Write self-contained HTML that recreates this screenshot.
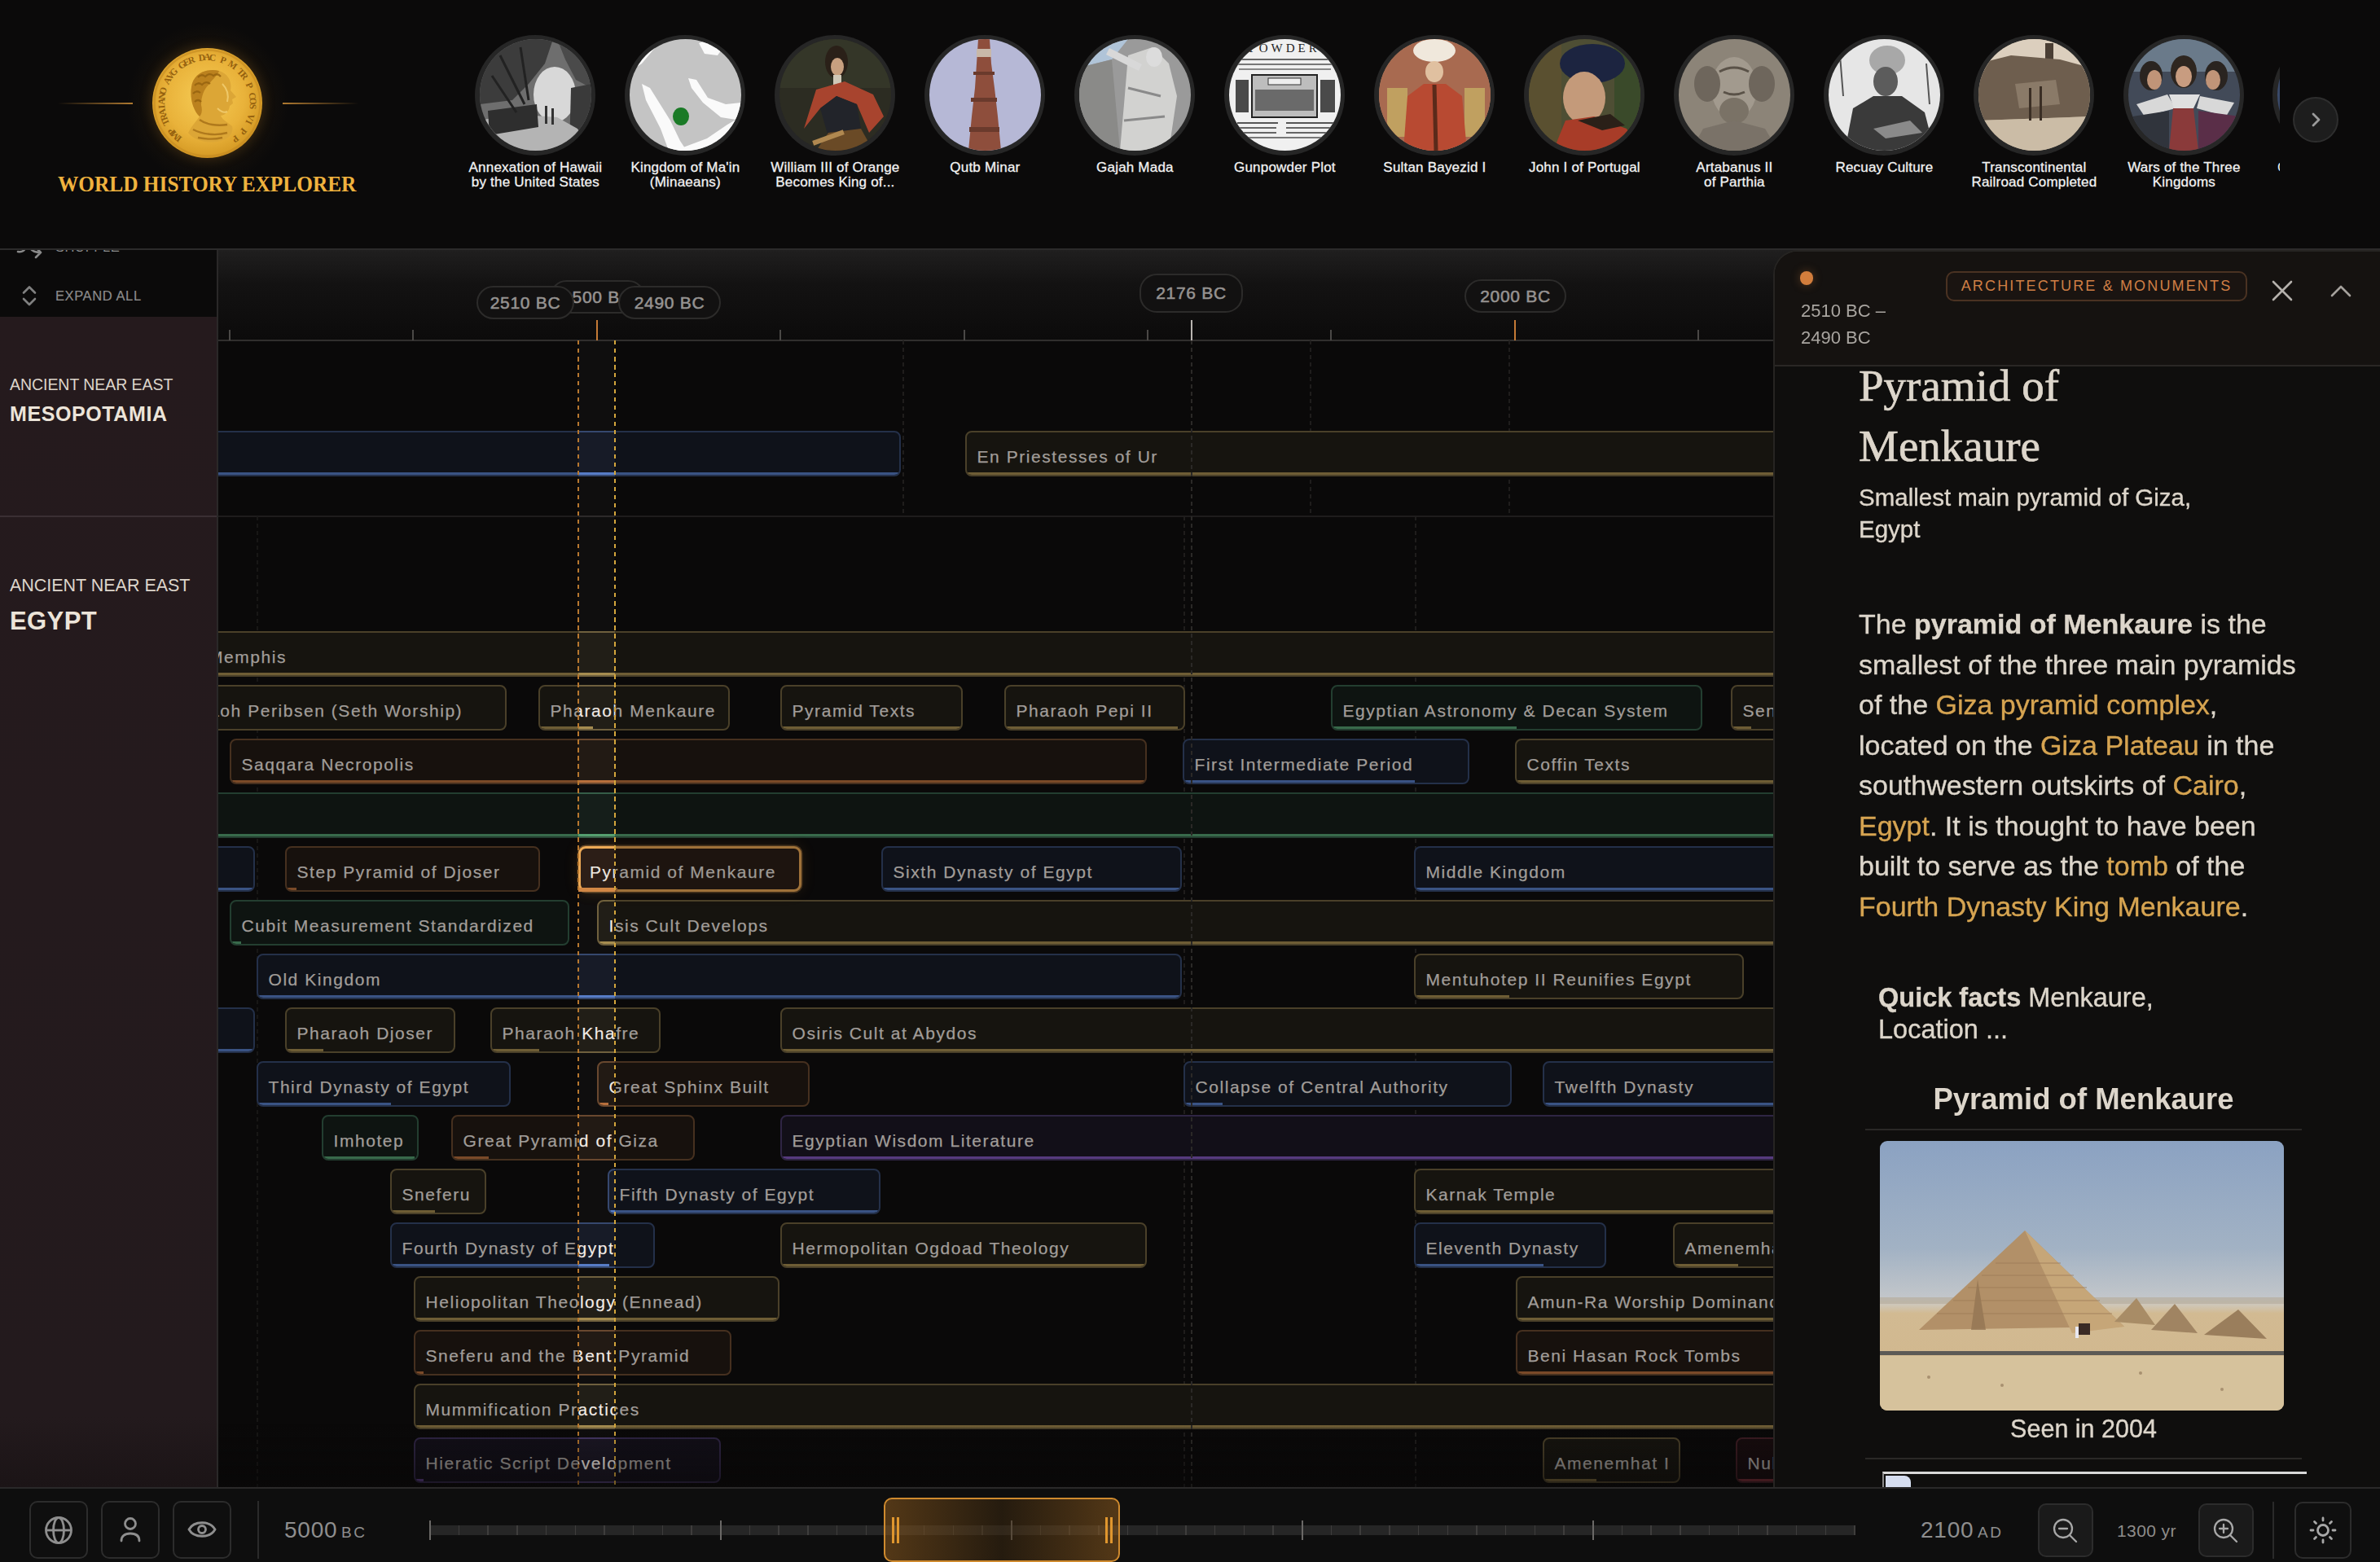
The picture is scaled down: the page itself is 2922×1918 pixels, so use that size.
<!DOCTYPE html><html><head><meta charset="utf-8"><style>
*{box-sizing:border-box;margin:0;padding:0}
html,body{width:2922px;height:1918px;overflow:hidden;background:#0b0a0a;font-family:"Liberation Sans",sans-serif}
.abs{position:absolute}
.bar{position:absolute;height:56px;border:2px solid;border-radius:8px;overflow:hidden;white-space:nowrap}
.bar .t{position:absolute;left:12.5px;top:17px;font-size:21px;letter-spacing:1.55px;color:#a19d99;line-height:26px;-webkit-text-stroke:0.25px #a19d99}
.bar .s{position:absolute;left:-2px;bottom:-2px;height:5px}
.thumb{position:absolute;width:148px;height:148px;border-radius:50%;background:#262626}
.thumb .img{position:absolute;left:5.5px;top:5.5px;width:137px;height:137px;border-radius:50%;overflow:hidden}
.tl{position:absolute;width:184px;text-align:center;color:#f2f2f2;font-size:17px;letter-spacing:0.2px;line-height:17.6px;-webkit-text-stroke:0.3px #f2f2f2}
.pill{position:absolute;height:41px;border:2px solid #2c2b2a;border-radius:21px;background:#121111;color:#969391;font-weight:normal;-webkit-text-stroke:0.55px #969391;font-size:21px;letter-spacing:0.7px;text-align:center;line-height:37px}
.btn{position:absolute;width:72px;height:71px;border:2px solid #2c2c2c;border-radius:10px;background:#0f0f0f}
</style></head><body>
<div class="abs" style="left:0;top:0;width:2922px;height:306px;background:#0b0a0a"></div>
<div class="abs" style="left:155px;top:27px;width:200px;height:200px;border-radius:50%;background:radial-gradient(circle,rgba(160,110,30,0.25) 0%,rgba(120,80,20,0.08) 50%,rgba(0,0,0,0) 70%)"></div>
<div class="abs" style="left:71px;top:126px;width:92px;height:2px;background:linear-gradient(90deg,rgba(176,122,48,0),#b07a30)"></div>
<div class="abs" style="left:347px;top:126px;width:93px;height:2px;background:linear-gradient(90deg,#b07a30,rgba(176,122,48,0))"></div>
<div class="abs" style="left:187px;top:59px;width:135px;height:135px;border-radius:50%;box-shadow:0 0 16px rgba(190,130,40,0.28)">
<svg width="135" height="135" viewBox="0 0 135 135" style="position:absolute;left:0;top:0">
<defs>
<radialGradient id="cg" cx="48%" cy="45%" r="60%"><stop offset="0" stop-color="#f6cc55"/><stop offset="0.6" stop-color="#e9b23a"/><stop offset="0.88" stop-color="#d79c26"/><stop offset="1" stop-color="#a86e16"/></radialGradient>
</defs>
<circle cx="67.5" cy="67.5" r="67.5" fill="url(#cg)"/>
<circle cx="67.5" cy="67.5" r="65" fill="none" stroke="#c48a22" stroke-width="2.5" opacity="0.6"/>
<g font-family="Liberation Serif" font-size="11.5" font-weight="bold" fill="#94600e"><text x="33.6" y="110.8" transform="rotate(-142.0 33.6 110.8)" text-anchor="middle" dominant-baseline="middle">I</text><text x="28.8" y="106.6" transform="rotate(-135.2 28.8 106.6)" text-anchor="middle" dominant-baseline="middle">M</text><text x="24.4" y="101.7" transform="rotate(-128.5 24.4 101.7)" text-anchor="middle" dominant-baseline="middle">P</text><text x="17.6" y="90.7" transform="rotate(-115.0 17.6 90.7)" text-anchor="middle" dominant-baseline="middle">T</text><text x="15.2" y="84.7" transform="rotate(-108.2 15.2 84.7)" text-anchor="middle" dominant-baseline="middle">R</text><text x="13.6" y="78.4" transform="rotate(-101.4 13.6 78.4)" text-anchor="middle" dominant-baseline="middle">A</text><text x="12.7" y="72.0" transform="rotate(-94.7 12.7 72.0)" text-anchor="middle" dominant-baseline="middle">I</text><text x="12.5" y="65.5" transform="rotate(-87.9 12.5 65.5)" text-anchor="middle" dominant-baseline="middle">A</text><text x="13.2" y="59.0" transform="rotate(-81.1 13.2 59.0)" text-anchor="middle" dominant-baseline="middle">N</text><text x="14.5" y="52.7" transform="rotate(-74.4 14.5 52.7)" text-anchor="middle" dominant-baseline="middle">O</text><text x="19.5" y="40.7" transform="rotate(-60.9 19.5 40.7)" text-anchor="middle" dominant-baseline="middle">A</text><text x="23.0" y="35.2" transform="rotate(-54.1 23.0 35.2)" text-anchor="middle" dominant-baseline="middle">V</text><text x="27.1" y="30.2" transform="rotate(-47.3 27.1 30.2)" text-anchor="middle" dominant-baseline="middle">G</text><text x="36.9" y="21.8" transform="rotate(-33.8 36.9 21.8)" text-anchor="middle" dominant-baseline="middle">G</text><text x="42.5" y="18.5" transform="rotate(-27.0 42.5 18.5)" text-anchor="middle" dominant-baseline="middle">E</text><text x="48.4" y="15.9" transform="rotate(-20.3 48.4 15.9)" text-anchor="middle" dominant-baseline="middle">R</text><text x="61.0" y="12.9" transform="rotate(-6.8 61.0 12.9)" text-anchor="middle" dominant-baseline="middle">D</text><text x="67.5" y="12.5" transform="rotate(0.0 67.5 12.5)" text-anchor="middle" dominant-baseline="middle">A</text><text x="74.0" y="12.9" transform="rotate(6.8 74.0 12.9)" text-anchor="middle" dominant-baseline="middle">C</text><text x="86.6" y="15.9" transform="rotate(20.3 86.6 15.9)" text-anchor="middle" dominant-baseline="middle">P</text><text x="98.1" y="21.8" transform="rotate(33.8 98.1 21.8)" text-anchor="middle" dominant-baseline="middle">M</text><text x="107.9" y="30.2" transform="rotate(47.3 107.9 30.2)" text-anchor="middle" dominant-baseline="middle">T</text><text x="112.0" y="35.2" transform="rotate(54.1 112.0 35.2)" text-anchor="middle" dominant-baseline="middle">R</text><text x="118.4" y="46.6" transform="rotate(67.6 118.4 46.6)" text-anchor="middle" dominant-baseline="middle">P</text><text x="121.8" y="59.0" transform="rotate(81.1 121.8 59.0)" text-anchor="middle" dominant-baseline="middle">C</text><text x="122.5" y="65.5" transform="rotate(87.9 122.5 65.5)" text-anchor="middle" dominant-baseline="middle">O</text><text x="122.3" y="72.0" transform="rotate(94.7 122.3 72.0)" text-anchor="middle" dominant-baseline="middle">S</text><text x="119.8" y="84.7" transform="rotate(108.2 119.8 84.7)" text-anchor="middle" dominant-baseline="middle">V</text><text x="117.4" y="90.7" transform="rotate(115.0 117.4 90.7)" text-anchor="middle" dominant-baseline="middle">I</text><text x="110.6" y="101.7" transform="rotate(128.5 110.6 101.7)" text-anchor="middle" dominant-baseline="middle">P</text><text x="101.4" y="110.8" transform="rotate(142.0 101.4 110.8)" text-anchor="middle" dominant-baseline="middle">P</text></g>
<path d="M48 48 C50 32 66 24 82 28 C94 32 98 42 96 52 L103 60 L98 63 L99 68 L95 71 C94 78 90 82 84 83 C86 88 92 91 98 96 C100 104 94 112 84 114 C68 118 52 114 44 104 C48 96 54 90 58 84 C50 76 46 62 48 48 Z" fill="#dca636"/>
<path d="M48 48 C50 32 66 24 82 28 C80 34 74 38 70 44 C64 50 60 58 60 70 C62 78 60 82 58 84 C50 76 46 62 48 48 Z" fill="#b57a1a" opacity="0.85"/>
<path d="M56 36 q4 -5 9 -1 q5 -5 10 -1 q5 -4 9 1 M52 46 q4 -5 9 -1 q5 -5 10 -1 M50 56 q4 -5 9 -1 M52 66 q4 -4 8 0" stroke="#94600e" stroke-width="2.2" fill="none" opacity="0.8"/>
<path d="M58 88 C66 94 80 96 92 94 M50 100 C62 106 78 108 92 104 M56 110 C66 112 78 112 86 110" stroke="#a06a14" stroke-width="2.4" fill="none" opacity="0.75"/>
<path d="M86 44 C92 50 94 58 92 66 M80 74 C84 78 88 80 92 78" stroke="#fbe08a" stroke-width="2" fill="none" opacity="0.6"/>
</svg></div>
<div class="abs" style="left:71px;top:209.5px;font-family:'Liberation Serif',serif;font-weight:bold;font-size:27px;letter-spacing:0px;color:#efb23e;white-space:nowrap;line-height:32px;transform:scaleX(0.938);transform-origin:0 0">WORLD HISTORY EXPLORER</div>
<div class="thumb" style="left:583.4px;top:42.5px"><div class="img"><svg width="137" height="137" viewBox="0 0 137 137"><rect width="137" height="137" fill="#6e6e6e"/>
<ellipse cx="92" cy="68" rx="26" ry="34" fill="#d8d8d8"/>
<polygon points="0,0 90,0 80,30 60,55 40,75 0,80" fill="#3c3c3c"/>
<polygon points="95,0 137,0 137,60 118,50 105,25" fill="#4a4a4a"/>
<polygon points="112,60 137,55 137,137 110,137" fill="#3a3a3a"/>
<polygon points="0,137 0,100 40,92 95,96 120,110 137,137" fill="#b4b4b4"/>
<polygon points="10,88 70,80 72,108 12,118" fill="#2e2e2e"/>
<path d="M25 20 L55 80 M50 10 L60 75 M15 45 L45 90" stroke="#222" stroke-width="3"/>
<rect x="80" y="82" width="3" height="22" fill="#333"/><rect x="88" y="85" width="3" height="20" fill="#333"/></svg></div></div>
<div class="tl" style="left:565.4px;top:197px">Annexation of Hawaii<br>by the United States</div>
<div class="thumb" style="left:767.4px;top:42.5px"><div class="img"><svg width="137" height="137" viewBox="0 0 137 137"><rect width="137" height="137" fill="#c4c4c4"/>
<polygon points="20,0 40,0 30,12 15,30 0,40 0,20" fill="#fafafa"/>
<polygon points="85,5 100,0 115,10 108,20 92,18" fill="#fafafa"/>
<polygon points="15,55 25,60 50,100 62,125 70,137 48,137 38,110 20,75" fill="#fafafa"/>
<polygon points="72,48 82,50 96,72 118,80 137,78 137,100 112,96 90,78 76,60" fill="#fafafa"/>
<polygon points="55,137 95,122 120,105 137,95 137,137" fill="#fafafa"/>
<ellipse cx="63" cy="95" rx="10" ry="11" fill="#1a7a26"/></svg></div></div>
<div class="tl" style="left:749.4px;top:197px">Kingdom of Ma'in<br>(Minaeans)</div>
<div class="thumb" style="left:951.4px;top:42.5px"><div class="img"><svg width="137" height="137" viewBox="0 0 137 137"><rect width="137" height="137" fill="#2c2c22"/>
<rect x="0" y="0" width="137" height="60" fill="#343628"/>
<ellipse cx="70" cy="28" rx="14" ry="20" fill="#2a2018"/>
<ellipse cx="71" cy="34" rx="8" ry="11" fill="#c8a080"/>
<rect x="66" y="44" width="10" height="12" fill="#d0c8b8"/>
<polygon points="30,110 45,62 80,52 115,68 128,95 110,115 95,80 70,70 50,85" fill="#a8442e"/>
<polygon points="50,85 70,70 95,80 100,110 60,120" fill="#22242a"/>
<polygon points="45,137 60,115 100,110 115,137" fill="#6a4a26"/>
<rect x="40" y="118" width="40" height="6" fill="#b08850" transform="rotate(-20 60 121)"/></svg></div></div>
<div class="tl" style="left:933.4px;top:197px">William III of Orange<br>Becomes King of...</div>
<div class="thumb" style="left:1135.4px;top:42.5px"><div class="img"><svg width="137" height="137" viewBox="0 0 137 137"><rect width="137" height="137" fill="#b6b8d6"/>
<polygon points="60,0 74,0 76,30 80,60 84,95 88,137 48,137 52,95 56,60 58,30" fill="#8e4e3c"/>
<rect x="58" y="12" width="18" height="10" fill="#c8b8a8"/>
<rect x="54" y="40" width="26" height="4" fill="#6a3a2c"/><rect x="51" y="72" width="32" height="5" fill="#6a3a2c"/><rect x="49" y="108" width="37" height="6" fill="#6a3a2c"/></svg></div></div>
<div class="tl" style="left:1117.4px;top:197px">Qutb Minar</div>
<div class="thumb" style="left:1319.4px;top:42.5px"><div class="img"><svg width="137" height="137" viewBox="0 0 137 137"><rect width="137" height="137" fill="#9a9a9a"/>
<polygon points="0,0 60,0 40,25 0,35" fill="#b0c4d8"/>
<polygon points="0,35 40,25 50,137 0,137" fill="#8a8a88"/>
<polygon points="60,20 90,10 110,30 120,70 110,137 50,137 55,80" fill="#d2d2d0"/>
<ellipse cx="92" cy="22" rx="10" ry="12" fill="#dcdcdc"/>
<path d="M35 15 L75 35" stroke="#d8d8d8" stroke-width="9"/>
<path d="M60 60 L100 70 M55 100 L105 95" stroke="#8a8a8a" stroke-width="3"/></svg></div></div>
<div class="tl" style="left:1301.4px;top:197px">Gajah Mada</div>
<div class="thumb" style="left:1503.4px;top:42.5px"><div class="img"><svg width="137" height="137" viewBox="0 0 137 137"><rect width="137" height="137" fill="#f0f0f0"/>
<text x="68" y="16" font-family="Liberation Serif" font-size="15" text-anchor="middle" fill="#222" letter-spacing="4">POWDER</text>
<rect x="10" y="24" width="117" height="2" fill="#666"/><rect x="8" y="30" width="121" height="2" fill="#777"/><rect x="12" y="36" width="113" height="2" fill="#888"/>
<rect x="28" y="44" width="80" height="52" fill="#bdbdbd" stroke="#222" stroke-width="2"/>
<rect x="32" y="62" width="72" height="26" fill="#6a6a6a"/>
<rect x="48" y="48" width="40" height="8" fill="#eee" stroke="#333"/>
<rect x="8" y="50" width="16" height="40" fill="#4a4a4a"/><rect x="112" y="50" width="18" height="40" fill="#4a4a4a"/>
<rect x="10" y="102" width="50" height="2" fill="#555"/><rect x="70" y="102" width="58" height="2" fill="#555"/><rect x="12" y="108" width="46" height="2" fill="#666"/><rect x="70" y="108" width="56" height="2" fill="#666"/><rect x="14" y="114" width="44" height="2" fill="#666"/><rect x="70" y="114" width="54" height="2" fill="#666"/><rect x="24" y="120" width="90" height="2" fill="#777"/></svg></div></div>
<div class="tl" style="left:1485.4px;top:197px">Gunpowder Plot</div>
<div class="thumb" style="left:1687.4px;top:42.5px"><div class="img"><svg width="137" height="137" viewBox="0 0 137 137"><rect width="137" height="137" fill="#b88a6a"/>
<polygon points="0,40 40,0 100,0 137,40 137,137 0,137" fill="#a86a50"/>
<rect x="10" y="60" width="25" height="60" fill="#c0a060"/><rect x="105" y="60" width="25" height="60" fill="#c0a060"/>
<ellipse cx="68" cy="14" rx="26" ry="14" fill="#f0e8dc"/>
<ellipse cx="68" cy="40" rx="11" ry="13" fill="#e0c0a0"/>
<polygon points="30,137 35,70 55,55 82,55 102,70 108,137" fill="#b84a32"/>
<path d="M68 56 L70 137" stroke="#5a2a1a" stroke-width="5"/></svg></div></div>
<div class="tl" style="left:1669.4px;top:197px">Sultan Bayezid I</div>
<div class="thumb" style="left:1871.4px;top:42.5px"><div class="img"><svg width="137" height="137" viewBox="0 0 137 137"><rect width="137" height="137" fill="#4e4e34"/>
<rect x="0" y="0" width="40" height="137" fill="#5a5030"/>
<rect x="105" y="0" width="32" height="137" fill="#3a4a2a"/>
<ellipse cx="78" cy="30" rx="40" ry="24" fill="#1c2440"/>
<ellipse cx="68" cy="72" rx="26" ry="32" fill="#c49a7a"/>
<polygon points="30,137 45,100 80,95 120,110 137,137" fill="#a83c28"/>
<polygon points="60,100 100,92 118,106 90,112" fill="#2a2018"/></svg></div></div>
<div class="tl" style="left:1853.4px;top:197px">John I of Portugal</div>
<div class="thumb" style="left:2055.4px;top:42.5px"><div class="img"><svg width="137" height="137" viewBox="0 0 137 137"><rect width="137" height="137" fill="#8c8478"/>
<ellipse cx="68" cy="60" rx="28" ry="38" fill="#a29a8e"/>
<ellipse cx="35" cy="55" rx="16" ry="22" fill="#6e665c"/><ellipse cx="102" cy="55" rx="16" ry="22" fill="#6e665c"/>
<ellipse cx="68" cy="88" rx="18" ry="16" fill="#7a7266"/>
<polygon points="15,137 30,110 68,100 106,110 122,137" fill="#7a7268"/>
<path d="M50 40 q18 -10 36 0 M55 65 q13 6 26 0" stroke="#5a5248" stroke-width="3" fill="none"/></svg></div></div>
<div class="tl" style="left:2037.4px;top:197px">Artabanus II<br>of Parthia</div>
<div class="thumb" style="left:2239.4px;top:42.5px"><div class="img"><svg width="137" height="137" viewBox="0 0 137 137"><rect width="137" height="137" fill="#e6e6e6"/>
<ellipse cx="72" cy="26" rx="22" ry="18" fill="#a8a8a8"/>
<ellipse cx="70" cy="52" rx="15" ry="18" fill="#5c5c5c"/>
<polygon points="20,137 30,85 55,70 90,70 118,90 130,137" fill="#3a3a3a"/>
<polygon points="55,110 100,100 115,115 70,122" fill="#8a8a8a"/>
<path d="M14 20 L18 70 M120 30 L124 80" stroke="#555" stroke-width="2"/></svg></div></div>
<div class="tl" style="left:2221.4px;top:197px">Recuay Culture</div>
<div class="thumb" style="left:2423.4px;top:42.5px"><div class="img"><svg width="137" height="137" viewBox="0 0 137 137"><rect width="137" height="137" fill="#bcae98"/>
<rect x="0" y="0" width="137" height="40" fill="#dccfbe"/>
<rect x="82" y="5" width="10" height="28" fill="#4a3e34"/>
<polygon points="0,30 40,20 100,25 137,35 137,95 0,100" fill="#6e5e4e"/>
<polygon points="45,55 95,50 100,80 50,85" fill="#8a7a68"/>
<polygon points="0,100 137,95 137,137 0,137" fill="#cbbca6"/>
<rect x="62" y="60" width="3" height="40" fill="#3a2e24"/><rect x="75" y="58" width="3" height="42" fill="#3a2e24"/></svg></div></div>
<div class="tl" style="left:2405.4px;top:197px">Transcontinental<br>Railroad Completed</div>
<div class="thumb" style="left:2607.4px;top:42.5px"><div class="img"><svg width="137" height="137" viewBox="0 0 137 137"><rect width="137" height="137" fill="#424a58"/>
<rect x="0" y="0" width="137" height="40" fill="#6a7a8a"/>
<ellipse cx="28" cy="45" rx="14" ry="18" fill="#2a2420"/><ellipse cx="68" cy="40" rx="16" ry="20" fill="#2e2620"/><ellipse cx="108" cy="45" rx="14" ry="18" fill="#2a2420"/>
<ellipse cx="32" cy="50" rx="9" ry="12" fill="#c09478"/><ellipse cx="68" cy="46" rx="10" ry="13" fill="#c89c80"/><ellipse cx="104" cy="50" rx="9" ry="12" fill="#c09478"/>
<polygon points="10,80 48,68 58,85 20,95" fill="#d8d8d8"/><polygon points="50,68 88,68 80,85 56,85" fill="#e0e0e0"/><polygon points="88,70 130,78 120,95 84,85" fill="#d8d8d8"/>
<polygon points="55,85 80,85 86,137 50,137" fill="#8a3a3a"/>
<polygon points="5,95 50,88 50,137 0,137" fill="#30343c"/><polygon points="86,88 137,95 137,137 86,137" fill="#5a2e48"/></svg></div></div>
<div class="tl" style="left:2589.4px;top:197px">Wars of the Three<br>Kingdoms</div>
<div class="abs" style="left:2780px;top:0;width:19px;height:306px;overflow:hidden"><div class="thumb" style="left:10px;top:42.5px"><div class="img" style="background:#3a4a6a"></div></div><div class="abs" style="left:16px;top:197px;color:#f2f2f2;font-size:17px;line-height:17.6px;white-space:nowrap">Construction of</div></div>
<div class="abs" style="left:2815px;top:119px;width:56px;height:56px;border-radius:50%;background:#1d1d1d;border:2px solid #2e2e2e"></div>
<svg class="abs" style="left:2833px;top:137px" width="20" height="20" viewBox="0 0 20 20"><path d="M7 3 L14 10 L7 17" stroke="#9a9a9a" stroke-width="2.8" fill="none" stroke-linecap="round" stroke-linejoin="round"/></svg>
<div class="abs" style="left:0;top:306px;width:266px;height:83px;background:#0b0a0a;overflow:hidden"><svg class="abs" style="left:18px;top:-15px" width="36" height="32" viewBox="0 0 36 32"><path d="M4 18 C9 19 13 17 14 10 M18 10 C19 17 24 19 32 19 M26 13 L32 19 L26 25" stroke="#8a8a8a" stroke-width="2.6" fill="none" stroke-linecap="round" stroke-linejoin="round"/></svg><div class="abs" style="left:68px;top:-13px;font-size:16.5px;letter-spacing:0.6px;color:#8a8a8a;line-height:20px">SHUFFLE</div><svg class="abs" style="left:27px;top:44px" width="18" height="26" viewBox="0 0 18 26"><path d="M2 9.5 L9 2.5 L16 9.5 M2 17 L9 24 L16 17" stroke="#808080" stroke-width="2.6" fill="none" stroke-linecap="round" stroke-linejoin="round"/></svg><div class="abs" style="left:68px;top:47px;font-size:16.5px;letter-spacing:0.6px;color:#8c8c8c;line-height:20px;-webkit-text-stroke:0.2px #8c8c8c">EXPAND ALL</div></div>
<div class="abs" style="left:0;top:389px;width:266px;height:1437px;background:linear-gradient(#251a1d 0%,#231a1d 94%,#1b1416 100%)"></div>
<div class="abs" style="left:0;top:633px;width:266px;height:2px;background:#3a2f33"></div>
<div class="abs" style="left:12px;top:461px;font-size:19.5px;letter-spacing:-0.05px;color:#ddd5cb;line-height:22px;white-space:nowrap">ANCIENT NEAR EAST</div>
<div class="abs" style="left:12px;top:494px;font-size:25px;font-weight:bold;letter-spacing:0.6px;color:#ece4d9;line-height:28px;white-space:nowrap">MESOPOTAMIA</div>
<div class="abs" style="left:12px;top:707px;font-size:21.5px;letter-spacing:-0.02px;color:#ddd5cb;line-height:24px;white-space:nowrap">ANCIENT NEAR EAST</div>
<div class="abs" style="left:12px;top:746px;font-size:31px;font-weight:bold;letter-spacing:0.4px;color:#ece4d9;line-height:34px;white-space:nowrap">EGYPT</div>
<div class="abs" style="left:266px;top:306px;width:2px;height:1520px;background:#2a2828"></div>
<div class="abs" style="left:268px;top:306px;width:1962px;height:1520px;overflow:hidden;background:#0a0909">
<div class="abs" style="left:0;top:0;width:100%;height:112px;background:linear-gradient(#201f1f 0%,#131212 38%,#0c0b0b 100%)"></div>
<div class="abs" style="left:0;top:111px;width:100%;height:2px;background:#302e2d"></div>
<div class="abs" style="left:13px;top:99px;width:2px;height:13px;background:#4a4846"></div>
<div class="abs" style="left:238px;top:99px;width:2px;height:13px;background:#4a4846"></div>
<div class="abs" style="left:689px;top:99px;width:2px;height:13px;background:#4a4846"></div>
<div class="abs" style="left:915px;top:99px;width:2px;height:13px;background:#4a4846"></div>
<div class="abs" style="left:1140px;top:99px;width:2px;height:13px;background:#4a4846"></div>
<div class="abs" style="left:1365px;top:99px;width:2px;height:13px;background:#4a4846"></div>
<div class="abs" style="left:1816px;top:99px;width:2px;height:13px;background:#4a4846"></div>
<div class="abs" style="left:464px;top:87px;width:2px;height:25px;background:#c47a36"></div>
<div class="abs" style="left:1194px;top:87px;width:2px;height:25px;background:#b8b4b0"></div>
<div class="abs" style="left:1591px;top:87px;width:2px;height:25px;background:#c47a36"></div>
<div class="pill" style="left:407px;top:38px;width:117px;height:41px;line-height:37px">2500 BC</div>
<div class="pill" style="left:317px;top:45px;width:120px;height:41px;line-height:37px">2510 BC</div>
<div class="pill" style="left:491px;top:45px;width:126px;height:41px;line-height:37px">2490 BC</div>
<div class="pill" style="left:1131px;top:30px;width:127px;height:48px;line-height:44px">2176 BC</div>
<div class="pill" style="left:1530px;top:37px;width:125px;height:41px;line-height:37px">2000 BC</div>
<div class="abs" style="left:0;top:327px;width:100%;height:1.5px;background:#1e1c1c"></div>
<div class="abs" style="left:840px;top:112px;width:1.5px;height:215px;background:repeating-linear-gradient(#1f1d1c 0 5px,transparent 5px 9px)"></div>
<div class="abs" style="left:1340px;top:112px;width:1.5px;height:215px;background:repeating-linear-gradient(#1f1d1c 0 5px,transparent 5px 9px)"></div>
<div class="abs" style="left:1584px;top:112px;width:1.5px;height:215px;background:repeating-linear-gradient(#1f1d1c 0 5px,transparent 5px 9px)"></div>
<div class="abs" style="left:47px;top:328px;width:1.5px;height:1192px;background:repeating-linear-gradient(#181716 0 5px,transparent 5px 9px)"></div>
<div class="abs" style="left:1185px;top:328px;width:1.5px;height:1192px;background:repeating-linear-gradient(#1f1d1c 0 5px,transparent 5px 9px)"></div>
<div class="abs" style="left:1469px;top:328px;width:1.5px;height:1192px;background:repeating-linear-gradient(#1f1d1c 0 5px,transparent 5px 9px)"></div>
<div class="bar" style="left:-68px;top:223px;width:906px;background:#0f121a;border-color:#243049"><div class="s" style="width:908px;background:#3a5384"></div><div class="t"></div></div>
<div class="bar" style="left:917px;top:223px;width:1115px;background:#16140f;border-color:#4a4029"><div class="s" style="width:1117px;background:#6e5d35"></div><div class="t">En Priestesses of Ur</div></div>
<div class="bar" style="left:-118px;top:469px;width:2150px;background:#16140f;border-color:#4a4029"><div class="s" style="width:2152px;background:#6e5d35"></div><div class="t" style="left:104px">Memphis</div></div>
<div class="bar" style="left:-76px;top:535px;width:430px;background:#16140f;border-color:#4a4029"><div class="s" style="width:2px;background:#6e5d35"></div><div class="t">Pharaoh Peribsen (Seth Worship)</div></div>
<div class="bar" style="left:393px;top:535px;width:235px;background:#16140f;border-color:#4a4029"><div class="s" style="width:67px;background:#6e5d35"></div><div class="t">Pharaoh Menkaure</div></div>
<div class="bar" style="left:690px;top:535px;width:224px;background:#16140f;border-color:#4a4029"><div class="s" style="width:226px;background:#6e5d35"></div><div class="t">Pyramid Texts</div></div>
<div class="bar" style="left:965px;top:535px;width:222px;background:#16140f;border-color:#4a4029"><div class="s" style="width:213px;background:#6e5d35"></div><div class="t">Pharaoh Pepi II</div></div>
<div class="bar" style="left:1366px;top:535px;width:456px;background:#0e1411;border-color:#233e30"><div class="s" style="width:228px;background:#386a4b"></div><div class="t">Egyptian Astronomy &amp; Decan System</div></div>
<div class="bar" style="left:1857px;top:535px;width:175px;background:#16140f;border-color:#4a4029"><div class="s" style="width:25px;background:#6e5d35"></div><div class="t">Senusret</div></div>
<div class="bar" style="left:14px;top:601px;width:1126px;background:#17110d;border-color:#46301f"><div class="s" style="width:1128px;background:#7a4a28"></div><div class="t">Saqqara Necropolis</div></div>
<div class="bar" style="left:1184px;top:601px;width:352px;background:#0f121a;border-color:#243049"><div class="s" style="width:285px;background:#3a5384"></div><div class="t">First Intermediate Period</div></div>
<div class="bar" style="left:1592px;top:601px;width:440px;background:#16140f;border-color:#4a4029"><div class="s" style="width:442px;background:#6e5d35"></div><div class="t">Coffin Texts</div></div>
<div class="bar" style="left:-118px;top:667px;width:2150px;background:#0e1411;border-color:#233e30"><div class="s" style="width:2152px;background:#386a4b"></div><div class="t"></div></div>
<div class="bar" style="left:-118px;top:733px;width:163px;background:#0f121a;border-color:#243049"><div class="s" style="width:165px;background:#3a5384"></div><div class="t"></div></div>
<div class="bar" style="left:82px;top:733px;width:313px;background:#17110d;border-color:#46301f"><div class="s" style="width:14px;background:#7a4a28"></div><div class="t">Step Pyramid of Djoser</div></div>
<div class="bar" style="left:814px;top:733px;width:369px;background:#0f121a;border-color:#243049"><div class="s" style="width:371px;background:#3a5384"></div><div class="t">Sixth Dynasty of Egypt</div></div>
<div class="bar" style="left:1468px;top:733px;width:564px;background:#0f121a;border-color:#243049"><div class="s" style="width:566px;background:#3a5384"></div><div class="t">Middle Kingdom</div></div>
<div class="bar" style="left:14px;top:799px;width:417px;background:#0e1411;border-color:#233e30"><div class="s" style="width:14px;background:#386a4b"></div><div class="t">Cubit Measurement Standardized</div></div>
<div class="bar" style="left:465px;top:799px;width:1567px;background:#16140f;border-color:#4a4029"><div class="s" style="width:1569px;background:#6e5d35"></div><div class="t">Isis Cult Develops</div></div>
<div class="bar" style="left:47px;top:865px;width:1136px;background:#0f121a;border-color:#243049"><div class="s" style="width:1138px;background:#3a5384"></div><div class="t">Old Kingdom</div></div>
<div class="bar" style="left:1468px;top:865px;width:405px;background:#16140f;border-color:#4a4029"><div class="s" style="width:117px;background:#6e5d35"></div><div class="t">Mentuhotep II Reunifies Egypt</div></div>
<div class="bar" style="left:-118px;top:931px;width:163px;background:#0f121a;border-color:#243049"><div class="s" style="width:165px;background:#3a5384"></div><div class="t"></div></div>
<div class="bar" style="left:82px;top:931px;width:209px;background:#16140f;border-color:#4a4029"><div class="s" style="width:47px;background:#6e5d35"></div><div class="t">Pharaoh Djoser</div></div>
<div class="bar" style="left:334px;top:931px;width:209px;background:#16140f;border-color:#4a4029"><div class="s" style="width:60px;background:#6e5d35"></div><div class="t">Pharaoh Khafre</div></div>
<div class="bar" style="left:690px;top:931px;width:1342px;background:#16140f;border-color:#4a4029"><div class="s" style="width:1344px;background:#6e5d35"></div><div class="t">Osiris Cult at Abydos</div></div>
<div class="bar" style="left:47px;top:997px;width:312px;background:#0f121a;border-color:#243049"><div class="s" style="width:165px;background:#3a5384"></div><div class="t">Third Dynasty of Egypt</div></div>
<div class="bar" style="left:465px;top:997px;width:261px;background:#17110d;border-color:#46301f"><div class="s" style="width:14px;background:#7a4a28"></div><div class="t">Great Sphinx Built</div></div>
<div class="bar" style="left:1185px;top:997px;width:403px;background:#0f121a;border-color:#243049"><div class="s" style="width:48px;background:#3a5384"></div><div class="t">Collapse of Central Authority</div></div>
<div class="bar" style="left:1626px;top:997px;width:406px;background:#0f121a;border-color:#243049"><div class="s" style="width:408px;background:#3a5384"></div><div class="t">Twelfth Dynasty</div></div>
<div class="bar" style="left:127px;top:1063px;width:119px;background:#0e1411;border-color:#233e30"><div class="s" style="width:114px;background:#386a4b"></div><div class="t">Imhotep</div></div>
<div class="bar" style="left:286px;top:1063px;width:299px;background:#17110d;border-color:#46301f"><div class="s" style="width:46px;background:#7a4a28"></div><div class="t">Great Pyramid of Giza</div></div>
<div class="bar" style="left:690px;top:1063px;width:1342px;background:#120f18;border-color:#2f2544"><div class="s" style="width:1344px;background:#563a7e"></div><div class="t">Egyptian Wisdom Literature</div></div>
<div class="bar" style="left:211px;top:1129px;width:118px;background:#16140f;border-color:#4a4029"><div class="s" style="width:55px;background:#6e5d35"></div><div class="t">Sneferu</div></div>
<div class="bar" style="left:478px;top:1129px;width:335px;background:#0f121a;border-color:#243049"><div class="s" style="width:337px;background:#3a5384"></div><div class="t">Fifth Dynasty of Egypt</div></div>
<div class="bar" style="left:1468px;top:1129px;width:564px;background:#16140f;border-color:#4a4029"><div class="s" style="width:566px;background:#6e5d35"></div><div class="t">Karnak Temple</div></div>
<div class="bar" style="left:211px;top:1195px;width:325px;background:#0f121a;border-color:#243049"><div class="s" style="width:269px;background:#3a5384"></div><div class="t">Fourth Dynasty of Egypt</div></div>
<div class="bar" style="left:690px;top:1195px;width:450px;background:#16140f;border-color:#4a4029"><div class="s" style="width:452px;background:#6e5d35"></div><div class="t">Hermopolitan Ogdoad Theology</div></div>
<div class="bar" style="left:1468px;top:1195px;width:236px;background:#0f121a;border-color:#243049"><div class="s" style="width:159px;background:#3a5384"></div><div class="t">Eleventh Dynasty</div></div>
<div class="bar" style="left:1786px;top:1195px;width:246px;background:#16140f;border-color:#4a4029"><div class="s" style="width:80px;background:#6e5d35"></div><div class="t">Amenemhat II</div></div>
<div class="bar" style="left:240px;top:1261px;width:449px;background:#16140f;border-color:#4a4029"><div class="s" style="width:451px;background:#6e5d35"></div><div class="t">Heliopolitan Theology (Ennead)</div></div>
<div class="bar" style="left:1593px;top:1261px;width:439px;background:#16140f;border-color:#4a4029"><div class="s" style="width:441px;background:#6e5d35"></div><div class="t">Amun-Ra Worship Dominance</div></div>
<div class="bar" style="left:240px;top:1327px;width:390px;background:#17110d;border-color:#46301f"><div class="s" style="width:12px;background:#7a4a28"></div><div class="t">Sneferu and the Bent Pyramid</div></div>
<div class="bar" style="left:1593px;top:1327px;width:439px;background:#17110d;border-color:#46301f"><div class="s" style="width:441px;background:#7a4a28"></div><div class="t">Beni Hasan Rock Tombs</div></div>
<div class="bar" style="left:240px;top:1393px;width:1792px;background:#16140f;border-color:#4a4029"><div class="s" style="width:1794px;background:#6e5d35"></div><div class="t">Mummification Practices</div></div>
<div class="bar" style="left:240px;top:1459px;width:377px;background:#120f18;border-color:#2f2544"><div class="s" style="width:12px;background:#563a7e"></div><div class="t">Hieratic Script Development</div></div>
<div class="bar" style="left:1626px;top:1459px;width:169px;background:#16140f;border-color:#4a4029"><div class="s" style="width:66px;background:#6e5d35"></div><div class="t">Amenemhat I</div></div>
<div class="bar" style="left:1863px;top:1459px;width:169px;background:#170c0e;border-color:#3c1c22"><div class="s" style="width:171px;background:#6e2a32"></div><div class="t">Nubian Campaigns</div></div>
<div class="abs" style="left:1194px;top:112px;width:1.5px;height:1408px;background:repeating-linear-gradient(#2b2927 0 5px,transparent 5px 9px)"></div>
<div class="abs" style="left:442px;top:733px;width:274px;height:56px;border:3px solid #9e7139;border-radius:9px;background:#1d140f;box-shadow:0 0 0 1.5px rgba(160,115,60,0.35),0 0 18px rgba(200,130,50,0.16)"><div class="abs" style="left:-3px;bottom:-3px;width:48px;height:5px;background:#8c5a2e"></div><div class="abs" style="left:11px;top:16px;font-size:21px;letter-spacing:1.55px;color:#9e9a95;-webkit-text-stroke:0.25px #9e9a95;line-height:26px;white-space:nowrap">Pyramid of Menkaure</div></div>
<div class="abs" style="left:442px;top:113px;width:45px;height:1407px;backdrop-filter:brightness(1.5)"></div>
<div class="abs" style="left:441px;top:112px;width:2px;height:1408px;background:repeating-linear-gradient(#b8782f 0 5.5px,transparent 5.5px 10px)"></div>
<div class="abs" style="left:486px;top:112px;width:2px;height:1408px;background:repeating-linear-gradient(#d4a63c 0 5.5px,transparent 5.5px 10px)"></div>
<div class="abs" style="left:0;top:1442px;width:100%;height:78px;background:linear-gradient(rgba(8,7,7,0),rgba(8,7,7,0.5))"></div>
</div>
<div class="abs" style="left:2177px;top:307px;width:760px;height:1519px;background:#0f0e0d;border-top-left-radius:30px;border-left:2px solid #262422;border-top:2px solid #262422;overflow:hidden">
<div class="abs" style="left:0;top:0;width:760px;height:141px;background:#151210;border-bottom:2px solid #2a2725"></div>
<div class="abs" style="left:30.5px;top:24px;width:16.5px;height:16.5px;border-radius:50%;background:#d27d3c;box-shadow:0 0 12px rgba(210,125,60,0.35)"></div>
<div class="abs" style="left:32px;top:55.5px;font-size:22px;color:#a9a5a0;line-height:33px;white-space:nowrap">2510 BC –<br>2490 BC</div>
<div class="abs" style="left:210px;top:24px;width:370px;height:37px;border:2px solid #4a3222;border-radius:10px;background:#1a1411;color:#cf7f45;font-size:18px;letter-spacing:2.15px;line-height:33px;text-align:center;white-space:nowrap">ARCHITECTURE &amp; MONUMENTS</div>
<svg class="abs" style="left:609px;top:33.5px" width="28" height="28" viewBox="0 0 28 28"><path d="M3 3 L25 25 M25 3 L3 25" stroke="#b5b1ac" stroke-width="2.6" stroke-linecap="round"/></svg>
<svg class="abs" style="left:682px;top:38.5px" width="26" height="18" viewBox="0 0 26 18"><path d="M2 15 L13 4 L24 15" stroke="#a5a19c" stroke-width="2.6" fill="none" stroke-linecap="round" stroke-linejoin="round"/></svg>
<div class="abs" style="left:103px;top:128px;font-family:'Liberation Serif',serif;font-size:55px;color:#ddd6cb;-webkit-text-stroke:0.7px #ddd6cb;line-height:74px;white-space:nowrap">Pyramid of<br>Menkaure</div>
<div class="abs" style="left:103px;top:282px;font-size:29.5px;color:#ddd6cb;-webkit-text-stroke:0.35px #ddd6cb;line-height:39px;white-space:nowrap">Smallest main pyramid of Giza,<br>Egypt</div>
<div class="abs" style="left:103px;top:433px;font-size:34px;color:#ddd6cb;-webkit-text-stroke:0.35px #ddd6cb;line-height:49.5px;white-space:nowrap">The <b>pyramid of Menkaure</b> is the<br>smallest of the three main pyramids<br>of the <span style="color:#d6a451;-webkit-text-stroke-color:#d6a451">Giza pyramid complex</span>,<br>located on the <span style="color:#d6a451;-webkit-text-stroke-color:#d6a451">Giza Plateau</span> in the<br>southwestern outskirts of <span style="color:#d6a451;-webkit-text-stroke-color:#d6a451">Cairo</span>,<br><span style="color:#d6a451;-webkit-text-stroke-color:#d6a451">Egypt</span>. It is thought to have been<br>built to serve as the <span style="color:#d6a451;-webkit-text-stroke-color:#d6a451">tomb</span> of the<br><span style="color:#d6a451;-webkit-text-stroke-color:#d6a451">Fourth Dynasty King Menkaure</span>.</div>
<div class="abs" style="left:127px;top:897px;font-size:32.5px;color:#ddd6cb;-webkit-text-stroke:0.35px #ddd6cb;line-height:39px;white-space:nowrap"><b>Quick facts</b> Menkaure,<br>Location ...</div>
<div class="abs" style="left:111px;top:1019px;width:536px;text-align:center;font-size:36.5px;font-weight:bold;color:#ddd6cb;line-height:44px;white-space:nowrap">Pyramid of Menkaure</div>
<div class="abs" style="left:111px;top:1077px;width:536px;height:2px;background:#2a2826"></div>
<div class="abs" style="left:129px;top:1092px;width:496px;height:331px;border-radius:9px;overflow:hidden;background:linear-gradient(#8ba2c2 0%,#a2b2c4 40%,#c2c6ca 58%,#cfc6b6 61%,#d2ba92 64%,#d0b68c 100%)">
<svg width="496" height="331" viewBox="0 0 496 331" style="position:absolute;left:0;top:0">
<rect x="0" y="192" width="496" height="8" fill="#b4aa98" opacity="0.6"/>
<polygon points="48,232 178,110 300,228" fill="#b29068"/>
<polygon points="178,110 300,228 236,236" fill="#c6a678"/>
<polygon points="120,170 112,232 130,232" fill="#8e7050" opacity="0.7"/>
<path d="M70 212 L285 212 M90 196 L270 196 M108 180 L254 180 M125 165 L238 165 M142 150 L222 150" stroke="#9a7a56" stroke-width="1.5" opacity="0.5"/>
<polygon points="288,222 315,193 338,226" fill="#a88c66"/>
<polygon points="333,232 362,200 390,236" fill="#a08462"/>
<polygon points="398,238 440,207 475,243" fill="#9a7e5c"/>
<rect x="0" y="258" width="496" height="5" fill="#5c5a56"/>
<rect x="0" y="264" width="496" height="67" fill="#d6c29c"/>
<rect x="244" y="224" width="14" height="14" fill="#3a2a24"/><rect x="240" y="228" width="4" height="14" fill="#e8e8f0"/>
<circle cx="60" cy="290" r="2" fill="#a89070"/><circle cx="150" cy="300" r="2" fill="#a89070"/><circle cx="320" cy="285" r="2" fill="#a89070"/><circle cx="420" cy="305" r="2" fill="#a89070"/>
</svg></div>
<div class="abs" style="left:111px;top:1427px;width:536px;text-align:center;font-size:30.5px;color:#ddd6cb;-webkit-text-stroke:0.35px #ddd6cb;line-height:36px;white-space:nowrap">Seen in 2004</div>
<div class="abs" style="left:111px;top:1480.5px;width:536px;height:2px;background:#2a2826"></div>
<div class="abs" style="left:132px;top:1498px;width:521px;height:30px;border-top:3px solid #d8d8d8;border-left:2px solid #888"></div>
<div class="abs" style="left:136px;top:1503px;width:31px;height:18px;background:#d6def0;border-top-right-radius:8px"></div>
</div>
<div class="abs" style="left:0;top:1826px;width:2922px;height:92px;background:#0e0e0e;border-top:2px solid #2a2929"></div>
<div class="btn" style="left:36px;top:1843px"></div>
<div class="btn" style="left:124px;top:1843px"></div>
<div class="btn" style="left:212px;top:1843px"></div>
<svg class="abs" style="left:53px;top:1862px" width="38" height="38" viewBox="0 0 38 38"><g stroke="#8e8e8e" stroke-width="2.8" fill="none"><circle cx="19" cy="17" r="15.5"/><ellipse cx="19" cy="17" rx="6.5" ry="15.5"/><path d="M3.5 17 H34.5"/></g></svg>
<svg class="abs" style="left:143px;top:1862px" width="34" height="36" viewBox="0 0 34 36"><g stroke="#8e8e8e" stroke-width="2.8" fill="none" stroke-linecap="round"><circle cx="17" cy="9" r="6.5"/><path d="M6 30 C6 24 10 21 17 21 C24 21 28 24 28 30"/></g></svg>
<svg class="abs" style="left:228px;top:1863px" width="40" height="30" viewBox="0 0 40 30"><g stroke="#8e8e8e" stroke-width="2.8" fill="none"><path d="M4 15 C10 4 30 4 36 15 C30 26 10 26 4 15 Z"/><circle cx="20" cy="15" r="4.5"/></g></svg>
<div class="abs" style="left:316px;top:1843px;width:2px;height:71px;background:#2a2a2a"></div>
<div class="abs" style="left:349px;top:1862px;white-space:nowrap;color:#8e8e8e;line-height:34px"><span style="font-size:28px;letter-spacing:0.8px">5000</span> <span style="font-size:19px;letter-spacing:2.5px">BC</span></div>
<div class="abs" style="left:527px;top:1873px;width:1751px;height:12px;background:#262626"></div>
<div class="abs" style="left:527.0px;top:1867px;width:2px;height:24px;background:#6a6866"></div>
<div class="abs" style="left:562.7px;top:1873px;width:1.5px;height:12px;background:#3e3d3c"></div>
<div class="abs" style="left:598.4px;top:1873px;width:1.5px;height:12px;background:#3e3d3c"></div>
<div class="abs" style="left:634.1px;top:1873px;width:1.5px;height:12px;background:#3e3d3c"></div>
<div class="abs" style="left:669.8px;top:1873px;width:1.5px;height:12px;background:#3e3d3c"></div>
<div class="abs" style="left:705.5px;top:1873px;width:1.5px;height:12px;background:#3e3d3c"></div>
<div class="abs" style="left:741.2px;top:1873px;width:1.5px;height:12px;background:#3e3d3c"></div>
<div class="abs" style="left:776.9px;top:1873px;width:1.5px;height:12px;background:#3e3d3c"></div>
<div class="abs" style="left:812.6px;top:1873px;width:1.5px;height:12px;background:#3e3d3c"></div>
<div class="abs" style="left:848.3px;top:1873px;width:1.5px;height:12px;background:#3e3d3c"></div>
<div class="abs" style="left:884.0px;top:1867px;width:2px;height:24px;background:#6a6866"></div>
<div class="abs" style="left:919.7px;top:1873px;width:1.5px;height:12px;background:#3e3d3c"></div>
<div class="abs" style="left:955.4px;top:1873px;width:1.5px;height:12px;background:#3e3d3c"></div>
<div class="abs" style="left:991.1px;top:1873px;width:1.5px;height:12px;background:#3e3d3c"></div>
<div class="abs" style="left:1026.8px;top:1873px;width:1.5px;height:12px;background:#3e3d3c"></div>
<div class="abs" style="left:1062.5px;top:1873px;width:1.5px;height:12px;background:#3e3d3c"></div>
<div class="abs" style="left:1098.2px;top:1873px;width:1.5px;height:12px;background:#3e3d3c"></div>
<div class="abs" style="left:1133.9px;top:1873px;width:1.5px;height:12px;background:#3e3d3c"></div>
<div class="abs" style="left:1169.6px;top:1873px;width:1.5px;height:12px;background:#3e3d3c"></div>
<div class="abs" style="left:1205.3px;top:1873px;width:1.5px;height:12px;background:#3e3d3c"></div>
<div class="abs" style="left:1241.0px;top:1867px;width:2px;height:24px;background:#6a6866"></div>
<div class="abs" style="left:1276.7px;top:1873px;width:1.5px;height:12px;background:#3e3d3c"></div>
<div class="abs" style="left:1312.4px;top:1873px;width:1.5px;height:12px;background:#3e3d3c"></div>
<div class="abs" style="left:1348.1px;top:1873px;width:1.5px;height:12px;background:#3e3d3c"></div>
<div class="abs" style="left:1383.8px;top:1873px;width:1.5px;height:12px;background:#3e3d3c"></div>
<div class="abs" style="left:1419.5px;top:1873px;width:1.5px;height:12px;background:#3e3d3c"></div>
<div class="abs" style="left:1455.2px;top:1873px;width:1.5px;height:12px;background:#3e3d3c"></div>
<div class="abs" style="left:1490.9px;top:1873px;width:1.5px;height:12px;background:#3e3d3c"></div>
<div class="abs" style="left:1526.6px;top:1873px;width:1.5px;height:12px;background:#3e3d3c"></div>
<div class="abs" style="left:1562.3px;top:1873px;width:1.5px;height:12px;background:#3e3d3c"></div>
<div class="abs" style="left:1598.0px;top:1867px;width:2px;height:24px;background:#6a6866"></div>
<div class="abs" style="left:1633.7px;top:1873px;width:1.5px;height:12px;background:#3e3d3c"></div>
<div class="abs" style="left:1669.4px;top:1873px;width:1.5px;height:12px;background:#3e3d3c"></div>
<div class="abs" style="left:1705.1px;top:1873px;width:1.5px;height:12px;background:#3e3d3c"></div>
<div class="abs" style="left:1740.8px;top:1873px;width:1.5px;height:12px;background:#3e3d3c"></div>
<div class="abs" style="left:1776.5px;top:1873px;width:1.5px;height:12px;background:#3e3d3c"></div>
<div class="abs" style="left:1812.2px;top:1873px;width:1.5px;height:12px;background:#3e3d3c"></div>
<div class="abs" style="left:1847.9px;top:1873px;width:1.5px;height:12px;background:#3e3d3c"></div>
<div class="abs" style="left:1883.6px;top:1873px;width:1.5px;height:12px;background:#3e3d3c"></div>
<div class="abs" style="left:1919.3px;top:1873px;width:1.5px;height:12px;background:#3e3d3c"></div>
<div class="abs" style="left:1955.0px;top:1867px;width:2px;height:24px;background:#6a6866"></div>
<div class="abs" style="left:1990.7px;top:1873px;width:1.5px;height:12px;background:#3e3d3c"></div>
<div class="abs" style="left:2026.4px;top:1873px;width:1.5px;height:12px;background:#3e3d3c"></div>
<div class="abs" style="left:2062.1px;top:1873px;width:1.5px;height:12px;background:#3e3d3c"></div>
<div class="abs" style="left:2097.8px;top:1873px;width:1.5px;height:12px;background:#3e3d3c"></div>
<div class="abs" style="left:2133.5px;top:1873px;width:1.5px;height:12px;background:#3e3d3c"></div>
<div class="abs" style="left:2169.2px;top:1873px;width:1.5px;height:12px;background:#3e3d3c"></div>
<div class="abs" style="left:2204.9px;top:1873px;width:1.5px;height:12px;background:#3e3d3c"></div>
<div class="abs" style="left:2240.6px;top:1873px;width:1.5px;height:12px;background:#3e3d3c"></div>
<div class="abs" style="left:2276.3px;top:1873px;width:1.5px;height:12px;background:#3e3d3c"></div>
<div class="abs" style="left:1085px;top:1839px;width:290px;height:79px;border:2.5px solid #cf8a2e;border-radius:10px;background:linear-gradient(90deg,rgba(140,90,30,0.55),rgba(60,40,15,0.5) 50%,rgba(140,90,30,0.55))"></div>
<div class="abs" style="left:1095px;top:1863px;width:2.5px;height:32px;background:#e0962e"></div>
<div class="abs" style="left:1101px;top:1863px;width:2.5px;height:32px;background:#e0962e"></div>
<div class="abs" style="left:1357px;top:1863px;width:2.5px;height:32px;background:#e0962e"></div>
<div class="abs" style="left:1363px;top:1863px;width:2.5px;height:32px;background:#e0962e"></div>
<div class="abs" style="left:2358px;top:1862px;white-space:nowrap;color:#8e8e8e;line-height:34px"><span style="font-size:28px;letter-spacing:0.8px">2100</span> <span style="font-size:19px;letter-spacing:2.5px">AD</span></div>
<div class="btn" style="left:2502px;top:1846px;width:68px;height:66px;background:#1a1a1a"></div>
<svg class="abs" style="left:2518px;top:1862px" width="36" height="36" viewBox="0 0 36 36"><g stroke="#a8a8a8" stroke-width="2.3" fill="none" stroke-linecap="round"><circle cx="15" cy="15" r="11"/><path d="M10 15 H20 M23 23 L31 31"/></g></svg>
<div class="abs" style="left:2599px;top:1866px;font-size:21px;color:#8e8c8a;letter-spacing:0.4px;line-height:28px;white-space:nowrap">1300 yr</div>
<div class="btn" style="left:2699px;top:1846px;width:68px;height:66px;background:#1a1a1a"></div>
<svg class="abs" style="left:2715px;top:1862px" width="36" height="36" viewBox="0 0 36 36"><g stroke="#a8a8a8" stroke-width="2.3" fill="none" stroke-linecap="round"><circle cx="15" cy="15" r="11"/><path d="M10 15 H20 M15 10 V20 M23 23 L31 31"/></g></svg>
<div class="abs" style="left:2790px;top:1844px;width:2px;height:70px;background:#2a2a2a"></div>
<div class="btn" style="left:2817px;top:1844px;width:70px;height:70px;background:#0f0f0f"></div>
<svg class="abs" style="left:2832px;top:1859px" width="40" height="40" viewBox="0 0 40 40"><g stroke="#a8a8a8" stroke-width="2.8" fill="none" stroke-linecap="round"><circle cx="20" cy="20" r="6.5"/><path d="M20 5 V8 M20 32 V35 M5 20 H8 M32 20 H35 M9.5 9.5 L11.5 11.5 M28.5 28.5 L30.5 30.5 M9.5 30.5 L11.5 28.5 M28.5 11.5 L30.5 9.5"/></g></svg>
<div class="abs" style="left:0;top:305px;width:2922px;height:2px;background:#2c2b2b"></div>
</body></html>
